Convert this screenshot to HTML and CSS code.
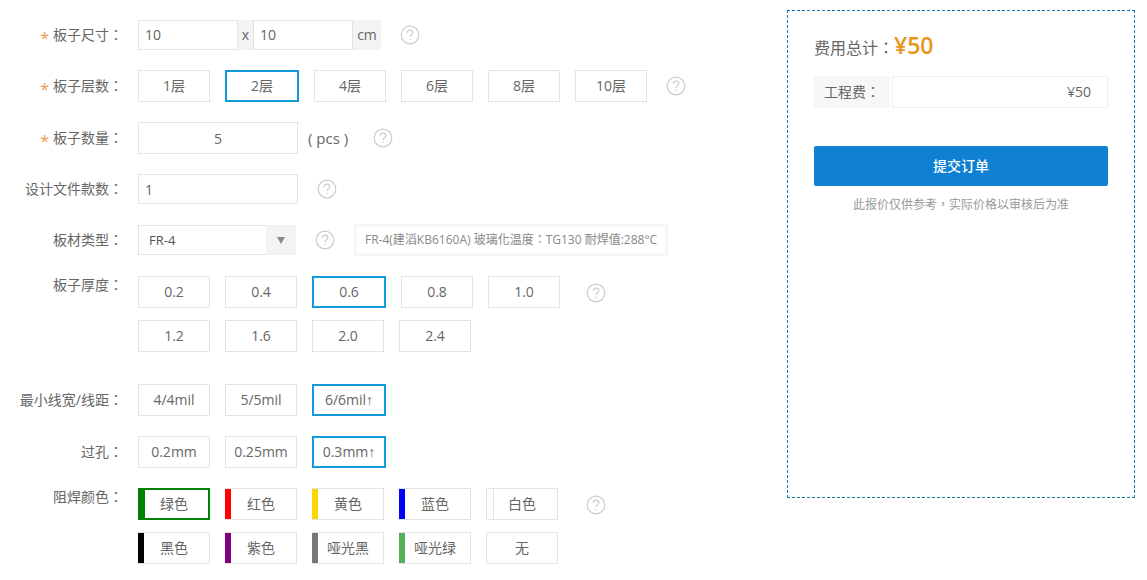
FILE: index.html
```html
<!DOCTYPE html>
<html lang="zh-TW">
<head>
  <meta charset="UTF-8" />
  <meta name="viewport" content="width=device-width, initial-scale=1" />
  <title>PCB 在线计价</title>
  <link rel="stylesheet" href="styles.css">
</head>
<body>
  <!-- Help icon, reused by every row -->
  <svg width="0" height="0" class="sprite" aria-hidden="true">
    <symbol id="help" viewBox="0 0 20 20">
      <circle cx="10" cy="10" r="8.8" />
      <path d="M7.2 7.9c0-1.7 1.2-2.8 2.8-2.8s2.8 1 2.8 2.5c0 2.1-2.7 2.2-2.7 4.5" />
      <path d="M10.1 13.7v1.4" />
    </symbol>
  </svg>

  <form class="page">
    <div class="fields">
      <div class="row">
        <label class="row-label" for="length"><i>*</i>板子尺寸：</label>
        <div class="size-group">
          <input type="text" class="text-input size" id="length" value="10">
          <span class="times">x</span>
          <input type="text" class="text-input size" id="width" aria-label="宽" value="10">
          <span class="unit">cm</span>
        </div>
        <svg class="help"><use href="#help" /></svg>
      </div>

      <div class="row" role="radiogroup" aria-labelledby="layers">
        <span class="row-label" id="layers"><i>*</i>板子层数：</span>
        <div class="options">
          <label class="option"><input type="radio" name="layers"><span>1层</span></label>
          <label class="option"><input type="radio" name="layers" checked><span>2层</span></label>
          <label class="option"><input type="radio" name="layers"><span>4层</span></label>
          <label class="option"><input type="radio" name="layers"><span>6层</span></label>
          <label class="option"><input type="radio" name="layers"><span>8层</span></label>
          <label class="option"><input type="radio" name="layers"><span>10层</span></label>
        </div>
        <svg class="help"><use href="#help" /></svg>
      </div>

      <div class="row">
        <label class="row-label" for="quantity"><i>*</i>板子数量：</label>
        <input type="text" class="text-input quantity" id="quantity" value="5">
        <span class="pcs">( pcs )</span>
        <svg class="help"><use href="#help" /></svg>
      </div>

      <div class="row">
        <label class="row-label" for="designs">设计文件款数：</label>
        <input type="text" class="text-input" id="designs" value="1">
        <svg class="help"><use href="#help" /></svg>
      </div>

      <div class="row material-row">
        <label class="row-label" for="material">板材类型：</label>
        <div class="select-box">
          <select id="material">
            <option>FR-4</option>
          </select>
          <span class="arrow"><svg width="8" height="7"><path d="M0 0h8L4 7z" /></svg></span>
        </div>
        <svg class="help"><use href="#help" /></svg>
        <span class="material-note">FR-4(建滔KB6160A) 玻璃化温度：TG130 耐焊值:288°C</span>
      </div>

      <div class="row row-multi" role="radiogroup" aria-labelledby="thickness">
        <span class="row-label" id="thickness">板子厚度：</span>
        <div class="options wrap">
          <label class="option"><input type="radio" name="thickness"><span>0.2</span></label>
          <label class="option"><input type="radio" name="thickness"><span>0.4</span></label>
          <label class="option"><input type="radio" name="thickness" checked><span>0.6</span></label>
          <label class="option"><input type="radio" name="thickness"><span>0.8</span></label>
          <label class="option"><input type="radio" name="thickness"><span>1.0</span></label>
          <label class="option"><input type="radio" name="thickness"><span>1.2</span></label>
          <label class="option"><input type="radio" name="thickness"><span>1.6</span></label>
          <label class="option"><input type="radio" name="thickness"><span>2.0</span></label>
          <label class="option"><input type="radio" name="thickness"><span>2.4</span></label>
        </div>
        <svg class="help"><use href="#help" /></svg>
      </div>

      <div class="row" role="radiogroup" aria-labelledby="track">
        <span class="row-label" id="track">最小线宽/线距：</span>
        <div class="options">
          <label class="option"><input type="radio" name="track"><span>4/4mil</span></label>
          <label class="option"><input type="radio" name="track"><span>5/5mil</span></label>
          <label class="option"><input type="radio" name="track" checked><span>6/6mil↑</span></label>
        </div>
      </div>

      <div class="row" role="radiogroup" aria-labelledby="via">
        <span class="row-label" id="via">过孔：</span>
        <div class="options">
          <label class="option"><input type="radio" name="via"><span>0.2mm</span></label>
          <label class="option"><input type="radio" name="via"><span>0.25mm</span></label>
          <label class="option"><input type="radio" name="via" checked><span>0.3mm↑</span></label>
        </div>
      </div>

      <div class="row row-multi" role="radiogroup" aria-labelledby="mask">
        <span class="row-label" id="mask">阻焊颜色：</span>
        <div class="options wrap">
          <label class="option color green"><input type="radio" name="mask" checked><span>绿色</span></label>
          <label class="option color red"><input type="radio" name="mask"><span>红色</span></label>
          <label class="option color yellow"><input type="radio" name="mask"><span>黄色</span></label>
          <label class="option color blue"><input type="radio" name="mask"><span>蓝色</span></label>
          <label class="option color white"><input type="radio" name="mask"><span>白色</span></label>
          <label class="option color black"><input type="radio" name="mask"><span>黑色</span></label>
          <label class="option color purple"><input type="radio" name="mask"><span>紫色</span></label>
          <label class="option color matte-black"><input type="radio" name="mask"><span>哑光黑</span></label>
          <label class="option color matte-green"><input type="radio" name="mask"><span>哑光绿</span></label>
          <label class="option"><input type="radio" name="mask"><span>无</span></label>
        </div>
        <svg class="help"><use href="#help" /></svg>
      </div>
    </div>

    <aside class="summary">
      <p class="total">费用总计：<strong>¥50</strong></p>
      <dl class="fee">
        <dt>工程费：</dt>
        <dd>¥50</dd>
      </dl>
      <button type="submit" class="submit">提交订单</button>
      <p class="hint">此报价仅供参考，实际价格以审核后为准</p>
    </aside>
  </form>
</body>
</html>
```
FILE: styles.css
```css
/* Reset */
* {
  box-sizing: border-box;
  margin: 0;
  padding: 0;
}

body {
  font-family: "Open Sans", "Liberation Sans", "Noto Sans CJK TC", "Noto Sans CJK SC", sans-serif;
  font-size: 14px;
  line-height: 20px;
  color: #666;
  background: #fff;
}

input,
select,
button {
  font: inherit;
  color: inherit;
}

.sprite {
  position: absolute;
}

.page {
  display: flex;
  align-items: flex-start;
  justify-content: space-between;
  padding: 10px 12px 10px 0;
}

/* Form rows */
.fields {
  display: flex;
  flex-direction: column;
  gap: 20px;
  padding-top: 10px;
}

.row {
  display: flex;
  align-items: center;
}

.row-label {
  width: 123px;
  margin-right: 15px;
  text-align: right;
  white-space: nowrap;
}

.row-label i {
  margin-right: 4px;
  font-size: 16px;
  font-style: normal;
  line-height: 0;
  vertical-align: -4px;
  color: #f5984a;
}

.row-multi {
  align-items: flex-start;
}

.row-multi .row-label {
  line-height: 18px;
}

.row-multi .help {
  margin-top: 7px;
}

.help {
  width: 20px;
  height: 20px;
  margin-left: 19px;
  fill: none;
  stroke: #ccc;
  stroke-width: 1.2;
}

/* Text boxes */
.text-input {
  width: 160px;
  height: 30px;
  padding: 0 6px;
  border: 1px solid #e3e3e3;
  background: #fff;
  outline: none;
}

.size-group {
  display: flex;
  background: #f3f3f3;
  line-height: 30px;
}

.size {
  width: 100px;
}

.times {
  width: 15px;
  text-align: center;
}

.unit {
  width: 28px;
  text-align: center;
}

.quantity {
  height: 32px;
  text-align: center;
}

.pcs {
  width: 56px;
  padding-left: 10px;
  font-size: 15px;
}

/* Drop-down */
.material-row {
  min-height: 32px;
}

.select-box {
  position: relative;
  width: 158px;
}

.select-box select {
  display: block;
  width: 100%;
  height: 30px;
  padding: 0 40px 0 10px;
  border: 1px solid #e3e3e3;
  border-radius: 0;
  background: #fff;
  font-size: 13px;
  color: #555;
  appearance: none;
}

.arrow {
  position: absolute;
  top: 0;
  right: 0;
  display: flex;
  align-items: center;
  justify-content: center;
  width: 30px;
  height: 30px;
  background: #f3f3f3;
  pointer-events: none;
}

.arrow path {
  fill: #888;
}

.material-note {
  height: 32px;
  margin-left: 19px;
  padding: 0 8px;
  border: 3px solid #f7f7f7;
  font-size: 12px;
  line-height: 26px;
  color: #888;
  white-space: nowrap;
}

/* Option boxes */
.options {
  display: flex;
  gap: 12px 15px;
}

.wrap {
  flex-wrap: wrap;
  width: 429px;
  padding-bottom: 12px;
}

.option {
  display: flex;
  cursor: pointer;
}

.option input {
  width: 0;
  height: 0;
  appearance: none;
  outline: none;
}

.option span {
  width: 72px;
  height: 32px;
  border: 1px solid #e3e3e3;
  line-height: 30px;
  text-align: center;
  white-space: nowrap;
}

.option input:checked + span {
  width: 74px;
  border: 2px solid #119bd8;
  line-height: 28px;
}

/* Solder mask swatches */
.color span {
  padding-left: 1px;
  border-left: 0;
  box-shadow: inset 6px 0 var(--swatch);
}

.color input:checked + span {
  width: 72px;
  padding-left: 0;
  border-color: var(--swatch);
  box-shadow: inset 5px 0 var(--swatch);
}

.green { --swatch: #008000; }
.red { --swatch: #f00; }
.yellow { --swatch: #ffd700; }
.blue { --swatch: #00f; }
.black { --swatch: #000; }
.purple { --swatch: #800080; }
.matte-black { --swatch: #777; }
.matte-green { --swatch: #55b05a; }

.white span {
  padding-left: 0;
  border-left: 1px solid #e3e3e3;
  box-shadow: inset 6px 0 #fff, inset 7px 0 #e3e3e3;
}

/* Price panel */
.summary {
  width: 348px;
  min-height: 488px;
  padding: 18px 26px;
  border: 1px dashed #1f78ad;
}

.total {
  font-size: 16px;
  line-height: 32px;
}

.total strong {
  font-size: 23px;
  font-weight: 600;
  color: #e8951a;
}

.fee {
  display: flex;
  gap: 2px;
  margin-top: 12px;
  line-height: 30px;
}

.fee dt {
  width: 76px;
  padding-left: 10px;
  border: 1px solid #f7f7f7;
  border-left: 0;
  background: #f7f7f7;
}

.fee dd {
  flex: 1;
  padding-right: 16px;
  border: 1px solid #f0f0f0;
  text-align: right;
}

.submit {
  width: 100%;
  height: 40px;
  margin-top: 38px;
  border: 0;
  border-radius: 2px;
  background: #1080d3;
  color: #fff;
  font-weight: 500;
  cursor: pointer;
}

.hint {
  margin-top: 9px;
  font-size: 12px;
  text-align: center;
  color: #999;
}
```
